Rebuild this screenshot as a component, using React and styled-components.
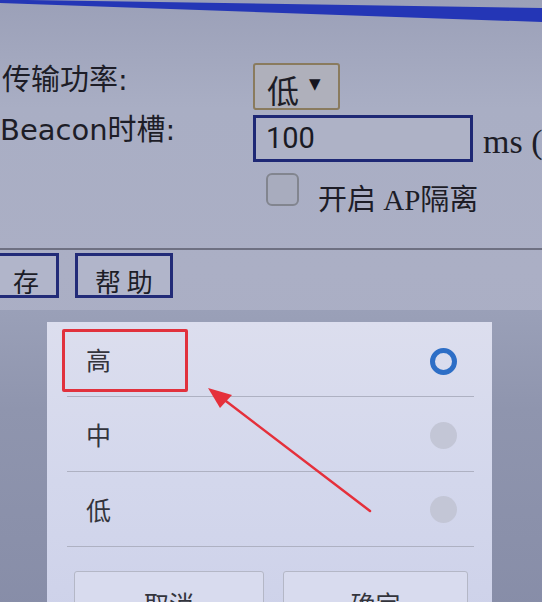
import React from "react";
import styled, { createGlobalStyle } from "styled-components";

const GlobalStyle = createGlobalStyle`
  html, body {
    margin: 0;
    padding: 0;
    width: 542px;
    height: 602px;
    overflow: hidden;
    background: #a9adc2;
  }
  * {
    box-sizing: border-box;
  }
`;

const Screen = styled.div`
  width: 542px;
  height: 602px;
  display: flex;
  flex-direction: column;
  overflow: hidden;
  background: linear-gradient(180deg, #9ba0b8 0%, #a9aec4 18%, #abafc5 45%, #a6abc1 100%);
  font-family: "DejaVu Sans", "Noto Sans CJK SC", sans-serif;
  color: #1d1d27;
`;

const TopStripe = styled.div`
  height: 22px;
  flex-shrink: 0;
  background: #2436b6;
  clip-path: polygon(5% 0, 100% 36%, 100% 100%, 0 14%, 0 0);
`;

const Form = styled.div`
  display: flex;
  flex-direction: column;
  margin-top: 41px;
`;

const Row = styled.div`
  display: flex;
  align-items: flex-start;
  margin-top: ${(p) => p.$gap || 0}px;
`;

const Label = styled.div`
  width: 253px;
  flex-shrink: 0;
  font-size: 29px;
  line-height: 32px;
  margin-top: ${(p) => p.$offset || 0}px;
  padding-left: ${(p) => p.$indent || 0}px;
  white-space: nowrap;
`;

const Select = styled.div`
  width: 87px;
  height: 47px;
  flex-shrink: 0;
  border: 2px solid #8a7b5e;
  border-radius: 3px;
  background: #afb0bb;
  display: flex;
  align-items: center;
  padding: 4px 0 0 12px;
  gap: 10px;
`;

const SelectValue = styled.span`
  font-family: "Noto Sans CJK SC", sans-serif;
  font-size: 32px;
  line-height: 36px;
`;

const Caret = styled.span`
  font-size: 15px;
  margin-top: -10px;
  color: #15151f;
`;

const Input = styled.div`
  width: 220px;
  height: 47px;
  flex-shrink: 0;
  border: 3px solid #1e2875;
  background: #aeb2c6;
  font-family: Roboto, "Noto Sans", sans-serif;
  font-size: 29px;
  line-height: 40px;
  padding-left: 10px;
  color: #1a1a24;
`;

const Unit = styled.span`
  font-family: "Liberation Serif", serif;
  font-size: 34px;
  margin: 8px 0 0 10px;
  white-space: nowrap;
`;

const Checkbox = styled.div`
  width: 33px;
  height: 33px;
  flex-shrink: 0;
  margin-left: 266px;
  border: 2px solid #82858f;
  border-radius: 6px;
  background: #a8acbe;
`;

const CheckText = styled.span`
  margin: 11px 0 0 19px;
  font-family: "Liberation Serif", "Noto Sans CJK SC", serif;
  font-size: 29px;
  line-height: 32px;
  white-space: nowrap;
`;

const Rule = styled.div`
  height: 2px;
  flex-shrink: 0;
  background: #6e7082;
  margin-top: ${(p) => p.$gap || 0}px;
`;

const ButtonBar = styled.div`
  display: flex;
  gap: 16px;
  margin-top: 3px;
`;

const PageButton = styled.div`
  height: 45px;
  border: 3px solid #222b78;
  background: #b1b5ca;
  font-family: "Noto Sans CJK SC", sans-serif;
  font-size: 26px;
  padding: 10px ${(p) => p.$right || 16}px 0 ${(p) => p.$left || 16}px;
  line-height: 30px;
  margin-left: ${(p) => p.$shift || 0}px;
  white-space: pre;
`;

const Backdrop = styled.div`
  flex: 1;
  margin-top: 12px;
  background: linear-gradient(180deg, #9aa0b8 0%, #8f95ae 30%, #868ca7 100%);
  padding: 12px 50px 0 47px;
  position: relative;
`;

const Dialog = styled.div`
  height: 100%;
  background: linear-gradient(180deg, #dcdeee 0%, #d3d7ec 50%, #cdd1e9 100%);
  position: relative;
  display: flex;
  flex-direction: column;
`;

const Option = styled.div`
  height: 75px;
  margin: 0 18px 0 20px;
  padding: 0 17px 0 19px;
  border-bottom: 1px solid #aeb1c2;
  display: flex;
  align-items: center;
  justify-content: space-between;
  font-family: "Noto Sans CJK SC", sans-serif;
  font-size: 25px;
  color: #33343c;
`;

const Radio = styled.span`
  width: 27px;
  height: 27px;
  border-radius: 50%;
  margin-top: ${(p) => p.$drop || 0}px;
  background: ${(p) => (p.$on ? "transparent" : "#c3c6d6")};
  border: ${(p) => (p.$on ? "5px solid #2d6ec6" : "none")};
`;

const Highlight = styled.div`
  position: absolute;
  left: 15px;
  top: 7px;
  width: 126px;
  height: 63px;
  border: 3px solid #e1313d;
  border-radius: 2px;
`;

const Actions = styled.div`
  display: grid;
  grid-template-columns: 190px 185px;
  gap: 19px;
  padding: 24px 0 0 27px;
`;

const ActionButton = styled.div`
  height: 70px;
  border: 1px solid #b4b7c6;
  border-radius: 3px;
  background: #d8dbee;
  text-align: center;
  font-family: "Noto Sans CJK SC", sans-serif;
  font-size: 25px;
  padding-top: 13px;
  color: #33343c;
`;

const Arrow = styled.svg`
  position: absolute;
  left: 0;
  top: 0;
  width: 542px;
  height: 290px;
  pointer-events: none;
`;

const options = [
  { label: "高", on: true, drop: 4 },
  { label: "中", on: false, drop: 2 },
  { label: "低", on: false, drop: 0 },
];

export default function App() {
  return (
    <>
      <GlobalStyle />
      <Screen>
        <TopStripe />
        <Form>
          <Row>
            <Label $offset={1} $indent={2}>传输功率:</Label>
            <Select>
              <SelectValue>低</SelectValue>
              <Caret>▼</Caret>
            </Select>
          </Row>
          <Row $gap={5}>
            <Label $offset={-1}>Beacon时槽:</Label>
            <Input>100</Input>
            <Unit>ms (4</Unit>
          </Row>
          <Row $gap={11}>
            <Checkbox />
            <CheckText>开启 AP隔离</CheckText>
          </Row>
        </Form>
        <Rule $gap={32} />
        <ButtonBar>
          <PageButton $shift={-4} $left={14} $right={17}>存</PageButton>
          <PageButton $left={17} $right={17}>帮 助</PageButton>
        </ButtonBar>
        <Backdrop>
          <Dialog>
            {options.map((o) => (
              <Option key={o.label}>
                <span>{o.label}</span>
                <Radio $on={o.on} $drop={o.drop} />
              </Option>
            ))}
            <Highlight />
            <Actions>
              <ActionButton>取消</ActionButton>
              <ActionButton>确定</ActionButton>
            </Actions>
          </Dialog>
          <Arrow viewBox="0 0 542 290">
            <line x1="370" y1="201" x2="218" y2="85" stroke="#e5303b" strokeWidth="2.5" strokeLinecap="round" />
            <polygon points="208,78 232,85 220,98" fill="#e5303b" />
          </Arrow>
        </Backdrop>
      </Screen>
    </>
  );
}
